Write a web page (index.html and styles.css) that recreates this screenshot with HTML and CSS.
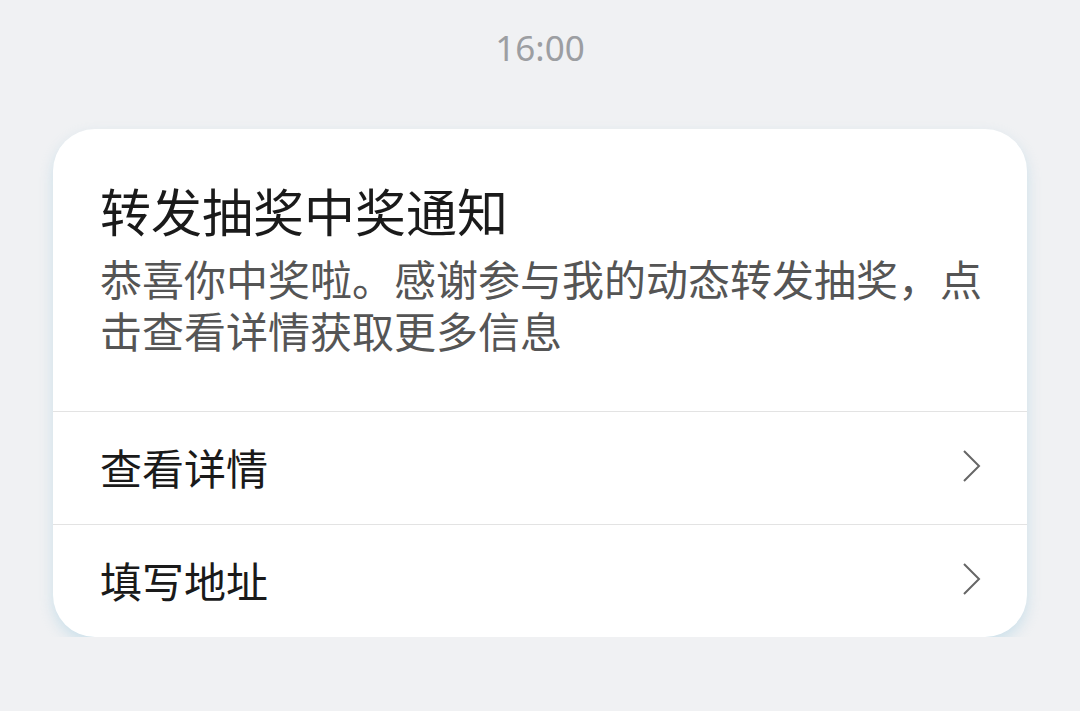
FILE: index.html
```html
<!DOCTYPE html>
<html lang="zh-CN">
<head>
    <meta charset="UTF-8">
    <meta name="viewport" content="width=device-width, initial-scale=1.0">
    <title>转发抽奖中奖通知</title>
    <link rel="stylesheet" href="styles.css">
</head>
<body>

<div class="time">16:00</div>

<div class="card">
    <div class="card-head">
        <div class="title">转发抽奖中奖通知</div>
        <div class="desc">恭喜你中奖啦。感谢参与我的动态转发抽奖，点击查看详情获取更多信息</div>
    </div>

    <div class="row">
        <span>查看详情</span>
        <svg class="chevron" width="20" height="34" viewBox="0 0 20 34">
            <polyline points="2,2 17,17 2,32" fill="none" stroke="#666666" stroke-width="2"/>
        </svg>
    </div>

    <div class="row">
        <span>填写地址</span>
        <svg class="chevron" width="20" height="34" viewBox="0 0 20 34">
            <polyline points="2,2 17,17 2,32" fill="none" stroke="#666666" stroke-width="2"/>
        </svg>
    </div>
</div>

</body>
</html>
```

FILE: styles.css
```css
body {
    margin: 0;
    padding: 0;
    background-color: #f0f1f3;
    font-family: "Noto Sans CJK SC", "Noto Sans", sans-serif;
}

.time {
    padding-top: 26px;
    height: 44px;
    line-height: 44px;
    text-align: center;
    font-family: "Noto Sans", Roboto, sans-serif;
    font-size: 35px;
    color: #9c9ea2;
}

.card {
    margin: 59px 0 0 53px;
    width: 974px;
    background-color: #ffffff;
    border-radius: 42px;
    box-shadow: 0 6px 14px rgba(160, 205, 225, 0.45);
}

.card-head {
    padding: 51px 30px 55px 47px;
}

.title {
    font-size: 51px;
    line-height: 60px;
    font-weight: 400;
    color: #1a1a1a;
    margin-bottom: 12px;
}

.desc {
    font-size: 42px;
    line-height: 52px;
    color: #555555;
}

.row {
    display: flex;
    align-items: center;
    justify-content: space-between;
    height: 108px;
    padding: 0 45px 4px 47px;
    border-top: 1px solid #e3e3e3;
    font-size: 42px;
    color: #1a1a1a;
}
```
